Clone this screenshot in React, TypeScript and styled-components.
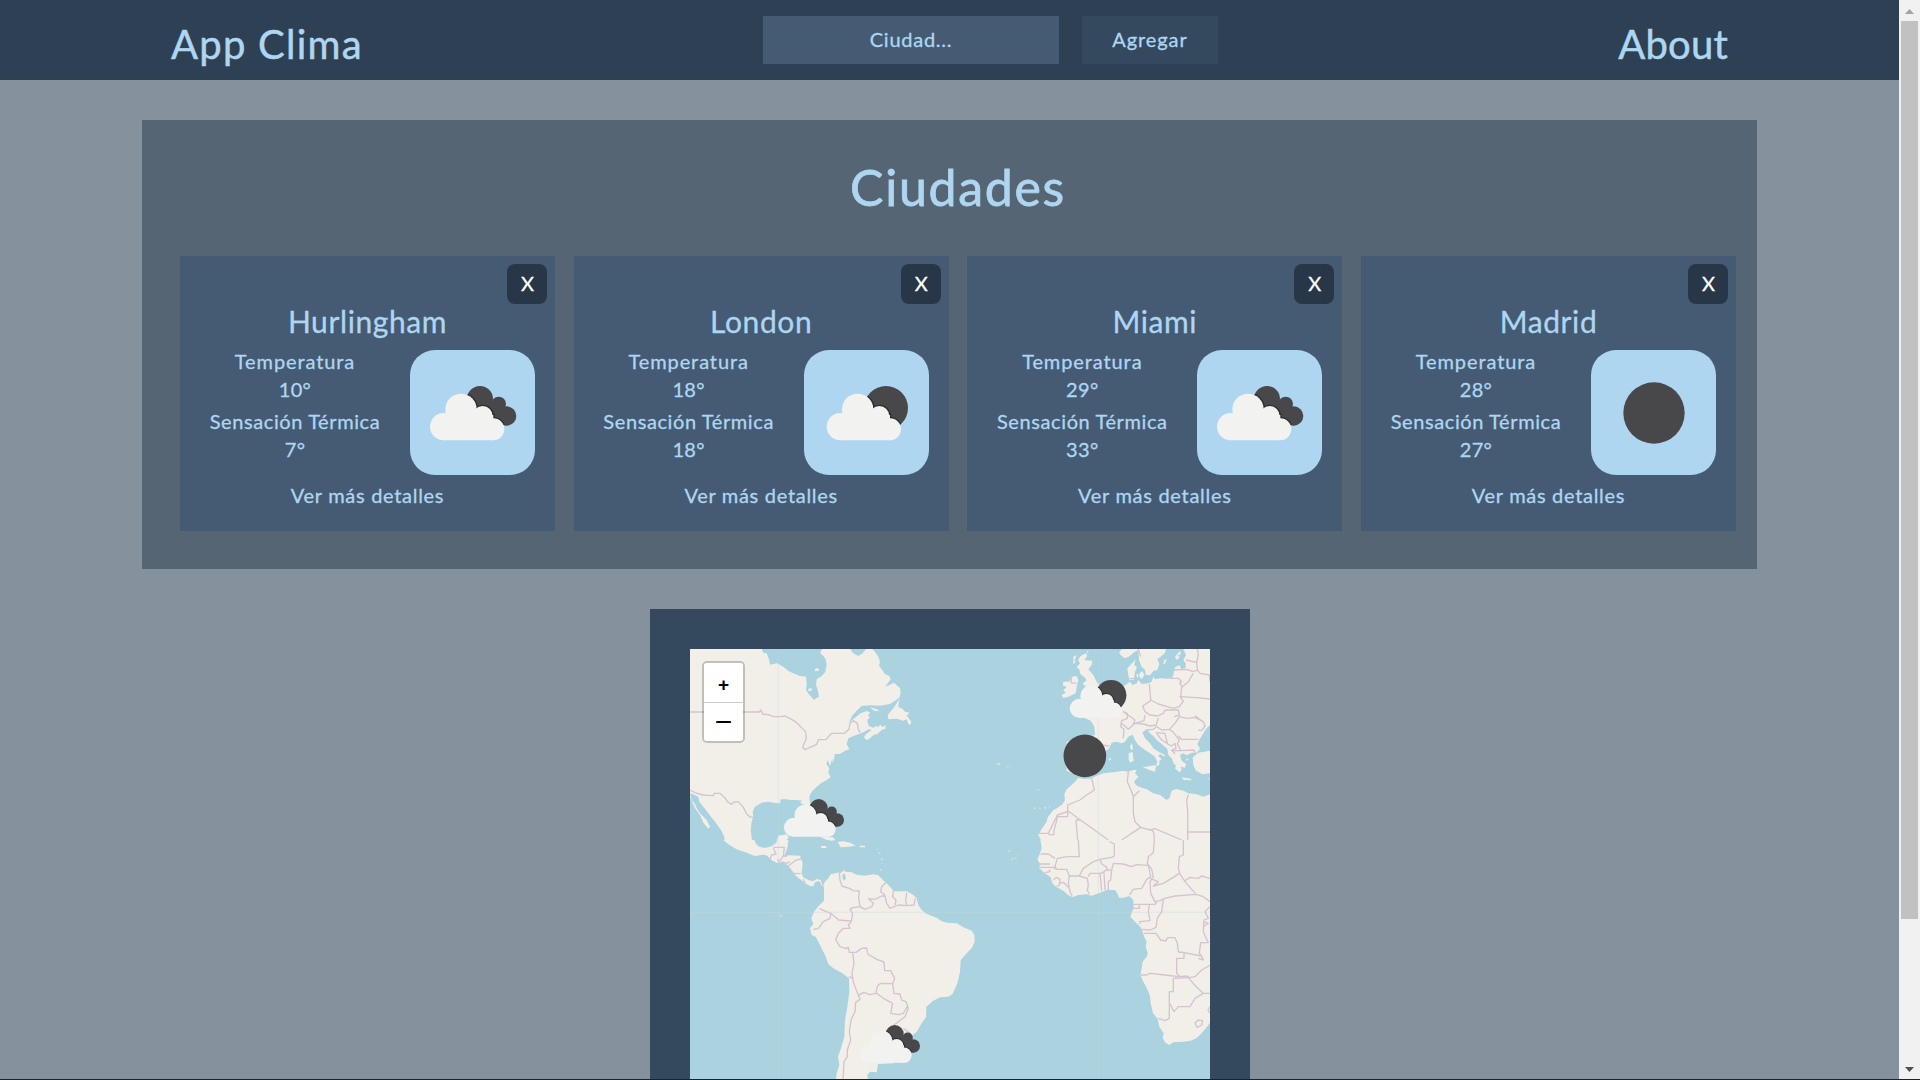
import React, { useId } from "react";
import styled, { createGlobalStyle } from "styled-components";

const GlobalStyle = createGlobalStyle`
  * { box-sizing: border-box; }
  html, body { margin: 0; padding: 0; height: 1080px; overflow: hidden; background: #12262f; }
  body { font-family: Lato, "Open Sans", sans-serif; color: #aed6f1; font-weight: 400; }
  button, input { font-family: inherit; }
`;

const Window = styled.div`
  display: flex;
  width: 1920px;
  height: 1079px;
  overflow: hidden;
`;

const Page = styled.div`
  width: 1899px;
  height: 1079px;
  overflow: hidden;
  background: #85929e;
  display: flex;
  flex-direction: column;
  align-items: center;
`;

const Nav = styled.nav`
  width: 100%;
  height: 80px;
  flex: none;
  padding: 0 171px;
  background: #2e4053;
  display: grid;
  grid-template-columns: 592px 1fr auto;
  align-items: start;
`;

const NavLink = styled.a<{ $spacing: string }>`
  font-size: 40px;
  line-height: 48px;
  padding-top: 20px;
  letter-spacing: ${(p) => p.$spacing};
  white-space: nowrap;
  -webkit-text-stroke: 0.5px #aed6f1;
`;

const SearchForm = styled.form`
  display: flex;
  gap: 23px;
  padding-top: 16px;
`;

const CityInput = styled.input`
  width: 296px;
  height: 48px;
  border: 0;
  padding: 0 0 2px;
  background: #455b73;
  color: #aed6f1;
  font-size: 20px;
  letter-spacing: 0.75px;
  text-align: center;
  -webkit-text-stroke: 0.3px #aed6f1;
  &::placeholder { color: #aed6f1; opacity: 1; }
`;

const AddButton = styled.button`
  width: 136px;
  height: 48px;
  border: 0;
  padding: 0 0 2px;
  background: #34495e;
  color: #aed6f1;
  font-size: 20px;
  letter-spacing: 0.9px;
  -webkit-text-stroke: 0.3px #aed6f1;
`;

const Cities = styled.section`
  width: 1615px;
  height: 449px;
  flex: none;
  margin-top: 40px;
  padding: 37px 21px 38px 38px;
  background: #566573;
`;

const Heading = styled.h1`
  margin: 0;
  height: 99px;
  font-size: 50px;
  line-height: 60px;
  font-weight: 400;
  letter-spacing: 1.7px;
  text-align: center;
  -webkit-text-stroke: 0.8px #aed6f1;
`;

const CardList = styled.div`
  display: flex;
  justify-content: space-between;
`;

const Card = styled.article`
  width: 375px;
  height: 275px;
  padding-top: 8px;
  background: #455b73;
  display: flex;
  flex-direction: column;
  -webkit-text-stroke: 0.3px #aed6f1;
`;

const CloseButton = styled.button`
  align-self: flex-end;
  margin-right: 8px;
  width: 40px;
  height: 40px;
  flex: none;
  border: 0;
  border-radius: 8px;
  padding: 0 0 2px 1px;
  background: #283747;
  color: #fff;
  font-size: 20px;
  -webkit-text-stroke: 0.3px #fff;
`;

const CityName = styled.h2`
  margin: -1px 0 0;
  height: 46px;
  line-height: 36px;
  font-size: 30px;
  font-weight: 400;
  letter-spacing: 0.6px;
  text-align: center;
`;

const CardBody = styled.div`
  display: flex;
  padding-right: 20px;
`;

const Readings = styled.div`
  flex: 1;
  display: grid;
  grid-template-rows: 28px 32px 28px 32px;
  text-align: center;
  font-size: 20px;
  line-height: 24px;
`;

const Reading = styled.span<{ $spacing?: string }>`
  letter-spacing: ${(p) => p.$spacing ?? "0.3px"};
`;

const IconTile = styled.div`
  width: 125px;
  height: 125px;
  margin-top: 1px;
  border-radius: 25px;
  background: #aed6f1;
`;

const DetailLink = styled.a`
  text-align: center;
  font-size: 20px;
  line-height: 24px;
  margin-top: 8px;
  letter-spacing: 0.7px;
`;

const MapPanel = styled.section`
  width: 600px;
  height: 680px;
  flex: none;
  margin-top: 40px;
  padding: 40px;
  background: #34495e;
`;

const MapView = styled.div`
  position: relative;
  width: 520px;
  height: 600px;
  overflow: hidden;
  background: #aad3df;
`;

const Marker = styled.div<{ $x: number; $y: number }>`
  position: absolute;
  left: ${(p) => p.$x}px;
  top: ${(p) => p.$y}px;
  width: 87px;
  height: 87px;
`;

const ZoomControl = styled.div`
  position: absolute;
  left: 12px;
  top: 12px;
  width: 43px;
  border: 2px solid rgba(0, 0, 0, 0.2);
  border-radius: 5px;
  background-clip: padding-box;
`;

const ZoomButton = styled.div<{ $first?: boolean }>`
  height: ${(p) => (p.$first ? 40 : 38)}px;
  background: #fff;
  color: #000;
  border-bottom: ${(p) => (p.$first ? "1px solid #ccc" : "0")};
  border-radius: ${(p) => (p.$first ? "3px 3px 0 0" : "0 0 3px 3px")};
  font: ${(p) => (p.$first ? "bold 19px / 44px" : "normal 30px / 37px")} "Liberation Sans", sans-serif;
  padding-left: 1px;
  text-align: center;
`;

const Scrollbar = styled.div`
  width: 21px;
  height: 1079px;
  background: #f1f1f1;
  display: flex;
  flex-direction: column;
  align-items: center;
`;

const ScrollArrow = styled.svg`
  display: block;
  width: 9px;
  height: 5px;
  margin: 9px 0 7px;
`;

const ScrollTrack = styled.div`
  flex: 1;
`;

const ScrollThumb = styled.div`
  width: 17px;
  height: 898px;
  background: #c1c1c1;
`;

const Drawing = styled.svg`
  display: block;
  width: 100%;
  height: 100%;
`;

const MapDrawing = styled(Drawing)`
  height: 600px;
`;

type Sky = "clouds" | "partly" | "clear";

const FrontCloud = () => (
  <>
    <circle cx="101" cy="230" r="41" />
    <circle cx="153" cy="178" r="47" />
    <circle cx="218" cy="198" r="30" />
    <circle cx="250" cy="238" r="33" />
    <path d="M101 195H250V271H101Z" />
  </>
);

const BackCloud = () => (
  <>
    <circle cx="210" cy="147" r="39" />
    <circle cx="266" cy="162" r="22" />
    <circle cx="290" cy="198" r="29" />
    <path d="M210 150L250 155L284 172L290 226L200 210Z" />
  </>
);

function WeatherIcon({ sky }: { sky: Sky }) {
  const id = useId();
  if (sky === "clear") {
    return (
      <Drawing viewBox="0 0 375 375">
        <circle cx="189" cy="189" r="92" fill="#48484a" />
      </Drawing>
    );
  }
  const back = sky === "clouds" ? <BackCloud /> : <circle cx="246" cy="174" r="66" />;
  const shift = sky === "clouds" ? 0 : 8;
  return (
    <Drawing viewBox="0 0 375 375">
      <clipPath id={id}>{back}</clipPath>
      <g fill="#48484a">{back}</g>
      <g clipPath={`url(#${id})`}>
        <g transform={`translate(${shift} 0)`} fill="#2d2d2e" stroke="#2d2d2e" strokeWidth="8">
          <FrontCloud />
        </g>
      </g>
      <g transform={`translate(${shift} 0)`} fill="#f2f2f1">
        <FrontCloud />
      </g>
    </Drawing>
  );
}

const WorldMap = () => (
  <MapDrawing viewBox="150 147 1560 1800">
    <g fill="#f2efe9">
      {/* North America */}
      <path d="M150 147H365L370 158 380 160 387 178 390 194 410 190 430 200 445 213 465 222 480 228 498 230 500 250 498 270 506 282 515 292 522 300 530 294 537 290 534 272 528 255 530 238 545 228 556 215 560 195 557 178 550 168 540 158 547 147H630L640 160 655 168 668 160 678 147H697L705 155 715 170 720 185 717 197 725 208 735 222 748 228 752 238 735 261 762 248 770 256 780 264 782 280 778 293 765 302 750 312 720 317 690 316 665 318 650 332 638 345 626 368 645 353 662 340 680 333 690 337 684 347 690 352 682 360 686 378 700 383 712 382 722 374 728 382 737 374 736 386 725 390 712 402 700 405 690 415 680 421 672 412 678 402 695 390 685 388 672 396 655 403 640 408 625 415 620 432 628 448 615 452 600 462 585 462 582 478 578 490 577 475 570 498 563 480 559 492 568 505 565 518 572 532 560 540 545 548 530 560 515 575 508 590 510 610 516 632 505 640 495 615 480 608 487 602 470 600 450 600 440 598 422 598 420 610 400 608 385 605 365 608 345 620 338 635 340 650 335 665 332 690 336 722H253V710L243 690 225 665 205 640 190 620 178 605 175 590 160 583 150 580Z" />
      <path d="M150 590L165 625 180 645 190 668 205 686 210 680 200 660 180 640 170 625 165 612 155 600 150 580Z" />
      <path d="M780 295L770 310 760 325 743 345 745 358 770 356 790 362 800 358 805 372 810 375 814 365 804 352 800 348 808 338 795 335 785 325 775 322 776 308Z" />
      <path d="M690 322L710 327 719 334 702 332ZM525 207L535 204 537 212 525 214ZM705 378L717 382 700 392ZM415 707L440 703 446 712 438 722 410 722ZM552 712L580 712 586 721 570 722ZM505 266L515 264 514 274 505 273Z" />
      <g transform="translate(0 720)">
        {/* Central and South America */}
        <path d="M250 0L265 13 290 28 320 38 345 48 368 44 380 46 395 61 410 68 430 66 445 77 460 97 468 108 482 119 495 129 510 138 520 139 525 126 538 123 545 136 552 140 552 182 538 196 522 215 514 235 520 252 510 265 515 285 527 290 540 315 555 345 565 372 580 385 605 398 627 415 628 455 622 500 615 540 613 590 603 625 594 650 598 675 590 700 586 740H686L682 705 690 695 710 697 714 672 760 670 800 640 812 590 830 575 845 550 858 532 859 500 880 482 900 472 925 470 938 462 952 430 960 395 962 360 980 340 995 325 1004 305 1003 285 995 272 970 262 950 250 920 248 904 243 890 233 860 222 845 210 835 195 830 175 820 165 800 154 762 154 745 135 728 119 715 106 700 103 675 107 650 104 635 97 615 95 612 88 600 97 572 103 565 115 555 125 548 137 542 120 530 117 518 124 505 120 490 112 485 100 488 70 480 47 445 46 430 52 436 40 443 20 445 0H414L408 9 395 19 375 24 357 20 348 11 343 0Z" />
        <path d="M593 6L610 4 630 8 647 17 625 20 602 22ZM542 18L560 18 558 24 545 24ZM659 17L675 17 675 22 659 22ZM535 -12L560 -9 575 -6 585 0 560 0Z" />
        <g opacity="0.5">
          <circle cx="713" cy="28" r="2" /><circle cx="719" cy="40" r="3" /><circle cx="725" cy="58" r="3" />
          <circle cx="726" cy="70" r="2" /><circle cx="722" cy="90" r="3" /><circle cx="422" cy="228" r="3" />
          <circle cx="402" cy="217" r="2" />
        </g>
        <path d="M607 105L613 100 618 113 614 122 608 116Z" fill="#aad3df" />
      </g>
      {/* Europe and northern Africa */}
      <g transform="translate(840 0)">
        <path d="M495 355L512 362 523 380 525 405 500 412 460 418 440 426 440 440 438 470 440 512 455 520 470 528 490 525 520 522 540 505 550 490 558 470 555 455 568 445 575 428 590 425 605 430 615 425 625 410 638 404 645 420 655 435 675 450 690 460 705 470 712 485 708 500 718 494 718 482 725 478 715 468 720 462 735 470 732 463 715 455 700 445 690 430 675 415 667 397 680 388 690 400 700 408 710 420 725 432 742 447 745 465 755 475 760 488 768 497 765 505 778 517 785 510 782 500 795 503 798 492 785 482 780 465 790 460 800 466 815 458 830 458 840 446 832 432 838 420 850 400 860 385 870 375V147H790L798 165 790 180 797 190 797 203 785 208 778 195 765 202 762 215 758 232 745 236 720 235 705 238 700 230 695 245 685 250 665 252 655 240 650 250 638 255 630 245 612 258 600 270 540 300 480 350Z" />
        <path d="M628 240L624 220 622 205 640 185 646 178 643 195 651 202 645 215 642 240ZM597 158L605 147H738L735 158 722 170 712 178 718 192 712 210 700 213 690 226 677 224 675 210 665 200 657 180 655 150 642 157 630 168 615 175 605 168ZM658 220L668 214 673 225 665 238 658 230ZM648 222L656 224 652 235ZM733 180L740 177 736 190 729 193ZM765 170L780 153 783 162 773 167 780 172 770 180Z" />
        <path d="M482 168L498 160 502 168 493 180 517 182 515 195 505 208 520 225 530 245 542 262 540 285 500 295 485 290 490 268 497 258 487 252 500 240 492 230 481 222 478 208 470 202 480 190 474 180ZM455 230L470 228 475 240 470 262 467 280 445 290 430 294 425 285 437 278 430 270 440 262 428 255 430 245 448 245ZM460 170L470 166 463 182 468 186 460 192ZM500 155L506 151 503 160Z" />
        <path d="M668 502L690 498 708 496 705 515 690 511ZM626 460L638 456 641 482 630 488 626 478ZM630 438L636 430 639 448 633 450ZM566 475L574 476 568 483ZM785 532L815 537 812 541 790 539ZM818 472L835 458 870 452V520L848 523 828 512 820 495ZM865 535H870V540ZM798 475L806 478 800 483Z" />
        <g opacity="0.5"><path d="M230 490H240V495H230ZM260 499L270 503 262 503ZM350 568L360 568 354 572ZM344 620L348 628 342 628ZM358 620L364 628 357 628ZM372 621L380 620 374 630ZM388 614L392 618 386 627Z" /></g>
        <path d="M475 533L465 545 455 555 440 568 433 582 435 600 428 612 412 624 400 630 383 652 380 665 365 687 355 705 363 721H870V583L850 590 830 583 805 580 790 572 770 567 755 572 748 595 740 600 720 585 700 580 680 568 660 562 648 555 642 545 655 530 645 520 650 510 640 510 625 515 610 512 580 517 550 520 530 528 510 536 490 537Z" />
      </g>
      {/* Southern Africa */}
      <g transform="translate(840 720)">
        <path d="M361 0L363 10 365 25 358 45 352 58 360 72 358 85 375 100 392 112 397 130 410 142 430 152 445 166 458 171 475 165 500 163 515 167 540 158 560 150 585 150 592 160 597 173 612 173 628 168 640 180 641 203 631 230 645 245 662 262 668 275 673 292 680 305 677 318 683 340 680 350 668 365 665 385 661 405 670 425 683 450 690 468 692 490 699 520 713 537 718 560 731 580 728 594 736 608 748 615 760 607 790 605 812 602 830 594 845 580 860 562 870 548V0Z" />
        <g opacity="0.5"><circle cx="268" cy="34" r="3" /><circle cx="292" cy="43" r="2" /><circle cx="277" cy="57" r="3" /><circle cx="287" cy="55" r="3" /></g>
      </g>
    </g>
    <g fill="none" stroke="#d5c3cf" strokeWidth="4" strokeLinejoin="round">
      <path d="M150 336H358L363 330 368 342 385 344 400 350 425 350 435 348 455 358 470 368 485 383 497 396 499 415 490 436 488 442 495 449 510 442 530 433 535 419 557 419 575 400 613 400 627 388 630 370 640 362 652 370 655 388 660 398M150 570L165 578 190 585 220 587 223 580 240 580 256 595 262 605 275 613 283 606 295 605 310 622 320 642 330 651 340 652" />
      <g transform="translate(0 720)">
        <path d="M400 22H433L430 48 418 65 412 58M400 24L408 42 395 45 390 58M428 48H440M425 65L440 70 450 65M445 78L465 62 487 55M462 100L482 101M490 118L495 130M546 125L550 136M613 88L598 100 600 120 606 138 628 145 640 152 658 153 656 175 660 200M538 206L572 220 596 240 632 243M572 222L570 235 550 245 535 266 520 268M660 200L638 203 630 208 638 220 634 245 625 255 630 265 610 265 595 280 587 300 600 320 618 326 625 322 628 337 648 337 665 325 680 324 683 342 710 358 732 366 734 392 752 392 764 415 758 432 762 460 780 462 785 480 798 485 805 505 795 530 775 545 762 555M660 200L675 208 695 200 700 190 686 176 705 178 725 168 735 168 740 190 750 205 775 195 800 197 822 195 826 175M737 128L725 140 722 155 735 165M760 152L758 170 768 180 765 195M800 158L797 180 800 196M638 337L642 370 636 400 640 425 645 440 655 466 672 457 688 464 708 460 712 438 722 430 758 431M710 460L730 475 758 490 752 520 775 524 790 520 802 500M628 410L638 415M655 466L660 478 647 487 645 515 633 540 628 575 632 600 622 630 622 650 612 665 608 740M790 565L810 580" />
      </g>
      <g transform="translate(840 0)">
        <path d="M455 230L453 248 470 250M655 147L662 170M628 236H645M798 180L830 187 835 165 832 147M762 210L800 208 820 215 832 210 840 220 868 225 870 245M750 235H775L785 245 778 250M830 187L833 212M820 220L805 245 785 262 782 290M778 248L788 262M688 252L692 300 715 312 742 320 760 325 778 320 790 303 780 290 830 293 870 297M692 302L668 318 675 335 690 345 712 348 730 340 735 330M735 330L775 330 778 345 762 350M675 345L672 362 640 372 645 360 610 335 622 340 622 355 605 362 602 380 612 388 610 415M605 370L625 388 645 370 670 372 690 378 708 375 715 355M708 378L725 390 748 388 765 370 778 350 800 355 825 352 850 365 855 378 845 392 835 390M825 347L845 362M680 390L700 388 712 378M708 398L735 400 742 430 725 420 710 400M748 388L758 395 778 420 772 432 782 450M775 408L785 418 835 418M742 432L755 438 765 430 768 445 755 450 765 462M755 452L785 452 822 450 825 458M545 435L568 438M515 535L523 570 500 585 480 600 443 615V632L565 720M443 635L412 645 400 670 385 700H357M385 704H402V690L408 670 412 650H443V635M468 660L480 660M468 660L473 720M625 515L622 545 635 575 640 590 658 572M640 590V640L645 665 662 682 605 720M662 682L690 690 705 686 785 720M695 688L702 700 703 720M805 583L800 600 803 635V720M803 696H870" />
      </g>
      <g transform="translate(840 720)">
        <path d="M475 0L478 50H440L412 55 405 80 410 88M362 42L385 42 405 55M358 72H390M358 82H400L410 88 440 88 448 108 445 130 450 155 456 168M375 98L390 95 388 88M400 120L410 112 420 118 418 135 410 140M420 130L430 127 445 142M448 108H478L502 115 505 135 502 150 508 163M478 108L490 85 505 75 520 65 540 58 545 72 558 80 562 88 552 95 542 100H510L505 110M540 100L545 152M552 98L555 150M562 90H572M575 90L572 120 565 125V150M540 58L575 52 583 48V12L568 5M575 90L580 70 610 72 635 80 650 74 685 76 692 110 680 118 665 145 640 148 628 165M703 0L700 38 685 50 682 70 695 88 700 110 690 125 692 160 705 185 720 182 735 175 765 168 828 163M690 115L715 125 700 138 730 130 760 112 778 100M790 0V45L778 50 775 85 780 102 795 125 828 163M795 122L810 112 835 115 845 108 870 115M828 163L850 170 870 185M640 193H705L710 185M640 205H658V195M688 195L685 215 690 242 660 245 658 252M665 268L690 270 708 262 712 235 725 215 730 180M672 280H708L722 300 738 303 742 293 765 293 772 310 775 335 845 348 850 360 835 355M775 337H792V355H770V400L780 410M661 405H680L690 400 735 405 775 410 800 408 808 413 825 410 845 390 870 376M845 348L838 340 842 308 865 308 850 275 852 240 865 235 855 215 870 200M850 245L865 250 852 258M760 415V455H748V535L735 542 715 535M760 415L805 413 830 442 850 460H870M850 460L825 475 810 500 775 500 762 515 750 492M825 550L835 540 848 542 845 555 832 562ZM870 500L864 510 870 520" />
      </g>
    </g>
    <g stroke="#c9d9dc" strokeWidth="2" opacity="0.5">
      <path d="M415 147V1947M1375 147V1947M150 937H1710" />
    </g>
  </MapDrawing>
);

interface City {
  name: string;
  temp: number;
  feels: number;
  sky: Sky;
  x: number;
  y: number;
}

const cities: City[] = [
  { name: "Hurlingham", temp: 10, feels: 7, sky: "clouds", x: 156.3, y: 351 },
  { name: "London", temp: 18, feels: 18, sky: "partly", x: 364.8, y: 6.2 },
  { name: "Miami", temp: 29, feels: 33, sky: "clouds", x: 80, y: 125 },
  { name: "Madrid", temp: 28, feels: 27, sky: "clear", x: 351.3, y: 62.5 },
];

function CityCard({ city }: { city: City }) {
  return (
    <Card>
      <CloseButton>X</CloseButton>
      <CityName>{city.name}</CityName>
      <CardBody>
        <Readings>
          <Reading $spacing="0.9px">Temperatura</Reading>
          <Reading>{city.temp}°</Reading>
          <Reading $spacing="0.6px">Sensación Térmica</Reading>
          <Reading>{city.feels}°</Reading>
        </Readings>
        <IconTile>
          <WeatherIcon sky={city.sky} />
        </IconTile>
      </CardBody>
      <DetailLink>Ver más detalles</DetailLink>
    </Card>
  );
}

export default function App() {
  return (
    <>
      <GlobalStyle />
      <Window>
        <Page>
          <Nav>
            <NavLink $spacing="1.25px">App Clima</NavLink>
            <SearchForm>
              <CityInput placeholder="Ciudad..." />
              <AddButton type="button">Agregar</AddButton>
            </SearchForm>
            <NavLink $spacing="0.2px">About</NavLink>
          </Nav>
          <Cities>
            <Heading>Ciudades</Heading>
            <CardList>
              {cities.map((c) => (
                <CityCard key={c.name} city={c} />
              ))}
            </CardList>
          </Cities>
          <MapPanel>
            <MapView>
              <WorldMap />
              {cities.map((c) => (
                <Marker key={c.name} $x={c.x} $y={c.y}>
                  <WeatherIcon sky={c.sky} />
                </Marker>
              ))}
              <ZoomControl>
                <ZoomButton $first>+</ZoomButton>
                <ZoomButton>−</ZoomButton>
              </ZoomControl>
            </MapView>
          </MapPanel>
        </Page>
        <Scrollbar>
          <ScrollArrow viewBox="0 0 9 5"><path d="M0 5L4.500 0L9 5Z" fill="#a3a3a3" /></ScrollArrow>
          <ScrollTrack>
            <ScrollThumb />
          </ScrollTrack>
          <ScrollArrow viewBox="0 0 9 5"><path d="M0 0L4.500 5L9 0Z" fill="#505050" /></ScrollArrow>
        </Scrollbar>
      </Window>
    </>
  );
}
